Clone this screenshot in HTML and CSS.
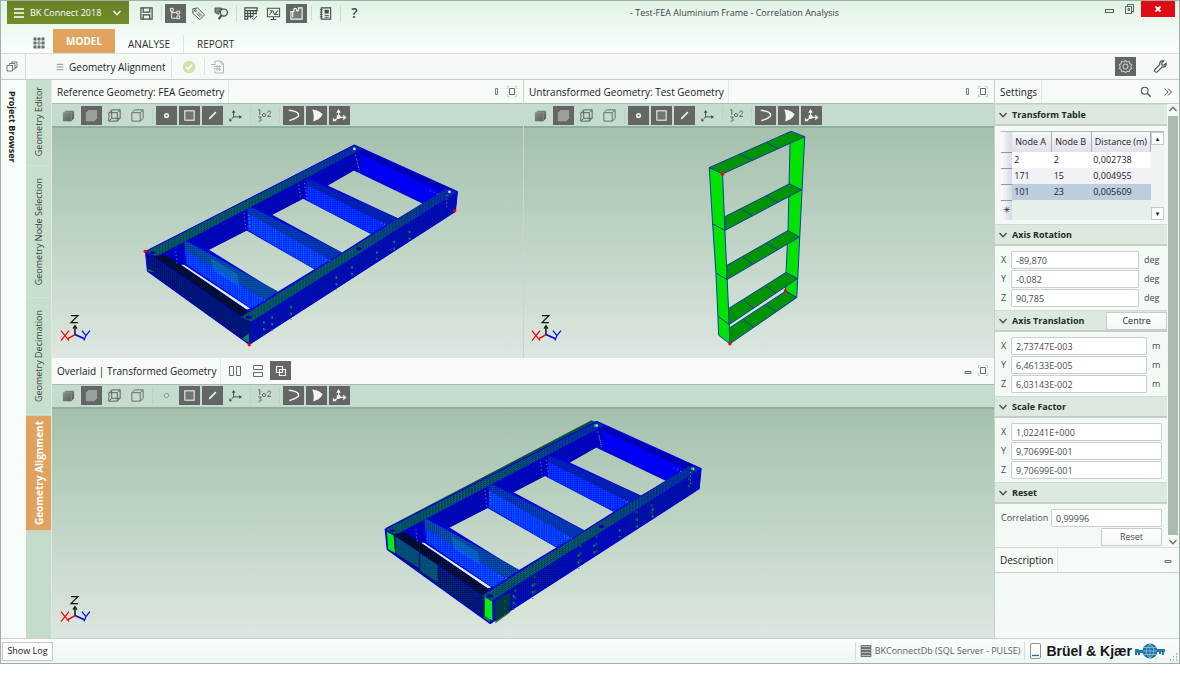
FILE: index.html
```
<!DOCTYPE html>
<html lang="en">
<head>
<meta charset="utf-8">
<title>Test-FEA Aluminium Frame - Correlation Analysis</title>
<link rel="stylesheet" href="styles.css">
</head>
<body>
<svg class="defs" aria-hidden="true">
  <defs>
    <linearGradient id="cubeFill" x1="0" y1="0" x2="1" y2="1"><stop offset="0" stop-color="#8c928e"/><stop offset="1" stop-color="#555a57"/></linearGradient>
    <symbol id="i-solid" viewBox="0 0 16 16"><path d="M2 5l3-2h9v8l-3 3H2z" fill="url(#cubeFill)"/><path d="M2 5h9l3-2M11 5v9" fill="none" stroke="#9ca29e" stroke-width=".6"/></symbol>
    <symbol id="i-shaded" viewBox="0 0 16 16"><path d="M2 5l3-3h9v9l-3 3H2z" fill="#9a9f9b"/></symbol>
    <symbol id="i-wire" viewBox="0 0 16 16"><path d="M2 5h9v9H2zM5 2h9v9H5zM2 5l3-3M11 5l3-3M2 14l3-3M11 14l3-3" fill="none" stroke="#555d58"/></symbol>
    <symbol id="i-hidden" viewBox="0 0 16 16"><path d="M2 5h9v9H2zM2 5l3-3h9v9l-3 3M11 5l3-3" fill="none" stroke="#626a65"/></symbol>
    <symbol id="i-point" viewBox="0 0 16 16"><circle cx="8" cy="8" r="2" fill="#777d79" stroke="currentColor" stroke-width="1.6"/></symbol>
    <symbol id="i-point-off" viewBox="0 0 16 16"><circle cx="8" cy="8" r="2.200" fill="#e4eee7" stroke="#7b837e"/></symbol>
    <symbol id="i-face" viewBox="0 0 16 16"><rect x="3" y="3" width="10" height="10" fill="#727774" stroke="currentColor" stroke-width="1.1"/></symbol>
    <symbol id="i-line" viewBox="0 0 16 16"><path d="M4.500 11.500l7-7" stroke="currentColor" stroke-width="1.8"/></symbol>
    <symbol id="i-axes" viewBox="0 0 16 16"><path d="M6 4v5.500h7M6 9.500l-3 3" fill="none" stroke="currentColor"/><path d="M4 5l2-3 2 3zM12 7.500l3 2-3 2zM1.500 11v3h3z" fill="currentColor"/></symbol>
    <symbol id="i-axes-on" viewBox="0 0 16 16"><path d="M7 4v6h6M7 10l-4 3" fill="none" stroke="currentColor" stroke-width="1.3"/><path d="M4.500 5L7 1l2.500 4zM12 7l3.500 3-3.500 3zM1 10.500V14h4z" fill="currentColor"/><circle cx="7" cy="9.500" r="2.200" fill="currentColor"/></symbol>
    <symbol id="i-numbers" viewBox="0 0 16 16"><g fill="none" stroke="#59605c"><path d="M1.500 2.500l1.500-1v6M1.500 9.500h3L3 11.500c3-.3 2.500 3-1.500 2.500"/><circle cx="7.500" cy="7.500" r="1.700"/><path d="M11 5c.5-2.500 4-2.500 3.500 0-.3 1.500-2 2-3.500 4h4"/></g></symbol>
    <symbol id="i-curve" viewBox="0 0 16 16"><path d="M3 2.500c5 .5 10.500 2 10.500 5S8.500 12 3.500 13.500" fill="none" stroke="currentColor" stroke-width="1.600"/></symbol>
    <symbol id="i-fan" viewBox="0 0 16 16"><path d="M3.500 1.500c4.500.5 9 2 11 5.500C12.500 11 9 13 4.500 14.500 5.500 10 5 5 3.500 1.500z" fill="currentColor"/></symbol>
    <symbol id="i-save" viewBox="0 0 16 16"><path d="M2 2h12v12H2zM4.500 2v4.500h7V2M4.500 14V9.500h7V14" fill="none" stroke="currentColor" stroke-width="1.3"/></symbol>
    <symbol id="i-tree" viewBox="0 0 16 16"><path d="M4 4v9h6M4 7h6" fill="none" stroke="currentColor"/><path d="M2.500 2.500h3v3h-3zM9.500 5.500h3v3h-3zM9.500 10.500h3v3h-3z" fill="#6c706d" stroke="currentColor"/></symbol>
    <symbol id="i-tag" viewBox="0 0 16 16"><path d="M2 3l5-1 7.500 7.500-5 5L2 8z" fill="none" stroke="currentColor"/><circle cx="4.700" cy="4.900" r="1" fill="none" stroke="currentColor"/><path d="M6 8l4 4M8 6.500l4 4M7.500 8l3 3" stroke="currentColor" stroke-width=".8"/></symbol>
    <symbol id="i-search-tag" viewBox="0 0 16 16"><path d="M1 2h7l1 1-3 2-1 4-4-2z" fill="#7b817d" stroke="currentColor" stroke-width=".8"/><circle cx="10.500" cy="7" r="3.800" fill="#dbe6de" stroke="currentColor" stroke-width="1.3"/><path d="M8 10l-3 4" stroke="currentColor" stroke-width="2.200"/></symbol>
    <symbol id="i-matrix" viewBox="0 0 16 16"><path d="M2 2h13v3H2zM2 5v9h3V5M5 8H2M5 11H2M8 5v8M11 5v5M5 8h9M5 11h6M14 5v4" fill="none" stroke="currentColor" stroke-width="1.3"/><path d="M9.500 12.500l2 2 3.500-4" fill="none" stroke="currentColor"/></symbol>
    <symbol id="i-monitor" viewBox="0 0 16 16"><path d="M1.500 2.500h13v9h-13zM5 14.500h6M8 11.500v3M3.500 9c2 0 2-4 3.500-4s1 4 2.500 4 1-4 3.500-4M4 5h2M10 9h3" fill="none" stroke="currentColor" stroke-width="1.100"/></symbol>
    <symbol id="i-puzzle" viewBox="0 0 16 16"><path d="M2 14V6h3V4c0-2 3-2 3 0v1h2V2h4v12zM4 6v6" fill="#777b78" stroke="currentColor" stroke-width="1.200"/></symbol>
    <symbol id="i-notebook" viewBox="0 0 16 16"><path d="M3.500 2h10v12h-10z" fill="none" stroke="currentColor" stroke-width="1.200"/><path d="M2 4h3M2 6.500h3M2 9h3M2 11.500h3M7 10h4.500M7 12h4.500" stroke="currentColor"/><path d="M7 4h4.500v4H7z" fill="currentColor"/></symbol>
    <symbol id="i-tiles" viewBox="0 0 12 12"><path d="M.500.500h3v3h-3zM4.500.500h3v3h-3zM8.500.500h3v3h-3zM.500 4.500h3v3h-3zM8.500 4.500h3v3h-3zM.500 8.500h3v3h-3zM4.500 8.500h3v3h-3zM8.500 8.500h3v3h-3z" fill="#656c68"/><circle cx="6" cy="6" r="1.300" fill="none" stroke="#646b67"/></symbol>
    <symbol id="i-copy" viewBox="0 0 12 12"><path d="M1 4.500h5.500V10H1zM3.500 4.500v-2H9V8H6.500M5.500 2.500V1H11v5.500H9" fill="none" stroke="#757d79"/></symbol>
    <symbol id="i-lines" viewBox="0 0 12 12"><path d="M1 2h10M1 6h10M1 10h10" stroke="currentColor" stroke-width="1.300"/></symbol>
    <symbol id="i-down" viewBox="0 0 10 10"><path d="M1.500 3L5 6.800 8.500 3" fill="none" stroke="currentColor" stroke-width="1.300"/></symbol>
    <symbol id="i-check" viewBox="0 0 14 14"><circle cx="7" cy="7" r="6.300" fill="#d3e2ab"/><path d="M4 7l2.200 2.300L10 4.800" fill="none" stroke="#fff" stroke-width="1.500"/></symbol>
    <symbol id="i-doc" viewBox="0 0 14 14"><path d="M4 4V1h6l2.500 2.500V13H4v-2M10 1v3h2.500" fill="none" stroke="#b4bbb7"/><path d="M0 4.500h5M3 6.500h7M3 9h7M6 5v6M8.500 5v6" stroke="#b4bbb7"/></symbol>
    <symbol id="i-gear" viewBox="0 0 16 16"><path d="M8 1.500l1.700 1.600 2.300-.6.600 2.300 2 1.500L13.500 8l1.100 2-2 1.300-.6 2.200-2.300-.5L8 14.500 6.300 13l-2.300.5-.6-2.200-2-1.300L2.500 8 1.400 6.300l2-1.500.6-2.300 2.300.6z" fill="none" stroke="#c9cecb" stroke-width="1.100"/><circle cx="8" cy="8" r="2.600" fill="none" stroke="#c9cecb" stroke-width="1.100"/></symbol>
    <symbol id="i-wrench" viewBox="0 0 16 16"><path d="M14 4.500L11.700 6.600 9.600 6.300 9.300 4.200 11.500 2C9 1.200 6.500 3.300 7.200 6L2 11.200c-1.300 1.500 1 3.700 2.500 2.500L9.800 8.500c2.700.8 5-1.500 4.200-4z" fill="none" stroke="currentColor" stroke-width="1.200"/></symbol>
    <symbol id="i-pin" viewBox="0 0 12 12"><path d="M4.500 2.500h2v6h-2z" fill="none" stroke="#767e79"/></symbol>
    <symbol id="i-max" viewBox="0 0 12 12"><path d="M3.500 2.500h5v6h-5z" fill="none" stroke="#666e69"/><path d="M1.500 3V.500h2M8.500.500h2V3M10.500 8v2.500h-2M3.500 10.500h-2V8" fill="none" stroke="#c3cac5"/></symbol>
    <symbol id="i-min" viewBox="0 0 12 12"><path d="M3 6.500h6v2H3z" fill="none" stroke="#666e69"/></symbol>
    <symbol id="i-cols" viewBox="0 0 14 14"><path d="M1.500 2.500h4v9h-4zM8.500 2.500h4v9h-4z" fill="none" stroke="#666e69"/></symbol>
    <symbol id="i-rows" viewBox="0 0 14 14"><path d="M2.500 1.500h9v4h-9zM2.500 8.500h9v4h-9z" fill="none" stroke="#666e69"/></symbol>
    <symbol id="i-overlay" viewBox="0 0 14 14"><path d="M2.500 2.500h6v6h-6zM5.500 5.500h6v6h-6z" fill="none" stroke="currentColor" stroke-width="1.200"/></symbol>
    <symbol id="i-find" viewBox="0 0 14 14"><circle cx="5.500" cy="5.500" r="4" fill="none" stroke="currentColor" stroke-width="1.200"/><path d="M8.500 8.500l4 4" stroke="currentColor" stroke-width="1.500"/></symbol>
    <symbol id="i-more" viewBox="0 0 12 12"><path d="M2.500 2.500L6 6 2.500 9.500M6 2.500L9.500 6 6 9.500" fill="none" stroke="currentColor"/></symbol>

    <pattern id="meshDark" width="6" height="6" patternUnits="userSpaceOnUse"><rect width="6" height="6" fill="#0004b4"/><path d="M0 0h3v3H0z" fill="#002c70"/><path d="M3 3h3v3H3z" fill="#0000e0"/></pattern>
    <pattern id="meshWall" width="6" height="6" patternUnits="userSpaceOnUse"><rect width="6" height="6" fill="#0000b8"/><path d="M0 0h3v3H0z" fill="#001890"/><path d="M3 3h3v3H3z" fill="#0000e4"/></pattern>
    <pattern id="meshGreen" width="9" height="6" patternUnits="userSpaceOnUse"><rect width="9" height="6" fill="#04485a"/><path d="M0 0h3v3H0zM5 3h3v3H5z" fill="#0a8048"/><path d="M3 0h3v3H3z" fill="#0018a0"/></pattern>
    <pattern id="meshBlack" width="6" height="6" patternUnits="userSpaceOnUse"><rect width="6" height="6" fill="#000c30"/><path d="M0 0h3v3H0z" fill="#001868"/><path d="M3 3h3v3H3z" fill="#000618"/></pattern>
    <pattern id="meshEnd" width="6" height="6" patternUnits="userSpaceOnUse"><rect width="6" height="6" fill="#000d78"/><path d="M0 0h3v3H0z" fill="#003c48"/><path d="M3 3h3v3H3z" fill="#0000a8"/></pattern>
    <pattern id="meshLight" width="7" height="6" patternUnits="userSpaceOnUse"><rect width="7" height="6" fill="#0034ff"/><path d="M0 0h3v3H0z" fill="#0878ff"/><path d="M4 3h3v2H4z" fill="#0010e0"/></pattern>
    <pattern id="meshTeal" width="6" height="6" patternUnits="userSpaceOnUse"><rect width="6" height="6" fill="#0430b0"/><path d="M0 0h3v3H0z" fill="#069070"/></pattern>
    <linearGradient id="fadeBlue" x1="0" y1="1" x2="1" y2="0"><stop offset="0" stop-color="#0000ff" stop-opacity="0"/><stop offset=".5" stop-color="#0000e8" stop-opacity=".05"/><stop offset="1" stop-color="#0000e8" stop-opacity=".5"/></linearGradient>

    <g id="fea-frame">
      <path d="M44 350L672 30 982 170 976 230 356 630 50 410zM670 107L592 152 803 250 878 207zM518 192L425 240 635 353 722 298zM348 287L235 345 440 472 552 404zM160 391L152 391 348 524 358 522z" fill="#0004dc" fill-rule="evenodd"/>
      <path d="M160 391L152 389 348 525 358 522z" fill="#e4e8f0"/>
      <path d="M75 366L690 45 690 104 670 107 592 152 540 130 518 192 425 240 370 220 348 287 235 345 180 320 160 386z" fill="url(#meshWall)"/>
      <path d="M690 42L960 160 890 205 692 104z" fill="#0000f4"/>
      <path d="M688 40L955 158 938 172 690 58z" fill="#0000b4"/>
      <path d="M528 130L803 250 770 272 528 150z" fill="#0420b4"/>
      <path d="M528 150L768 270 722 298 528 196z" fill="url(#meshLight)"/>
      <path d="M528 150L768 270 722 298 528 196z" fill="#0000ff" opacity=".3"/>
      <path d="M350 212L635 353 600 376 352 238z" fill="url(#meshTeal)"/>
      <path d="M350 212L635 353 600 376 352 238z" fill="#0010d0" opacity=".35"/>
      <path d="M352 236L600 376 552 404 352 286z" fill="url(#meshLight)"/>
      <path d="M160 316L442 470 404 496 162 348z" fill="url(#meshTeal)"/>
      <path d="M162 346L404 496 362 522 166 388z" fill="url(#meshLight)"/>
      <path d="M240 370L320 418 325 455 250 410z" fill="#10a0ff" opacity=".3"/>
      <path d="M80 372L160 330 166 388 148 388z" fill="#0000c4"/>
      <path d="M44 350L672 30 694 42 76 366z" fill="url(#meshGreen)"/>
      <path d="M44 350L672 30 694 42 76 366z" fill="url(#fadeBlue)"/>
      <path d="M50 356L330 548 356 630 50 410z" fill="url(#meshEnd)"/>
      <path d="M66 364L104 360 352 528 334 548z" fill="url(#meshBlack)"/>
      <path d="M330 548L945 163 982 170 362 562z" fill="url(#meshGreen)"/>
      <path d="M330 548L945 163 982 170 362 562z" fill="url(#fadeBlue)"/>
      <path d="M362 562L982 172 976 230 356 630z" fill="url(#meshDark)"/>
      <path d="M330 548L362 562 356 630 330 608z" fill="url(#meshEnd)"/>
      <path d="M335 612l20-16v30zM52 402l18 10-18-2z" fill="#08805a"/>
      <g fill="none" stroke="#0000e8" stroke-width="3"><path d="M44 350L672 30 982 170 976 230 356 630 50 410z"/><path d="M330 548L362 562 356 630M362 562L982 172M330 548L945 163M76 366L690 44" stroke-width="2" stroke-opacity=".5"/></g>
      <g fill="none" stroke="#06905e" stroke-width="5" stroke-dasharray="7 13"><path d="M400 560v44M425 545v44M482 514v42M618 425v42M665 395v40M740 350v24M838 288v34M792 318v32"/></g>
      <g fill="none" stroke="#8080c8" stroke-width="3" stroke-dasharray="3 8"><path d="M675 60l12 48M680 75l6 28M505 150l6 45M522 145l8 48M340 235l6 50M354 240l4 44M135 350l4 38M752 262l20 12M575 370l26 10M380 488l32 12M900 168l26 12M950 180v40"/></g>
      <circle cx="672" cy="42" r="4" fill="#dce6ec"/><circle cx="958" cy="171" r="4" fill="#dce6ec"/><ellipse cx="686" cy="342" rx="8" ry="5" fill="#0000a0"/><ellipse cx="355" cy="548" rx="9" ry="5" fill="#0000a0"/><ellipse cx="66" cy="354" rx="7" ry="4" fill="#0000a0"/>
    </g>
    <g id="triad" fill="none" stroke-width="1.200">
      <path d="M74 335l9 4" stroke="#0000e8" stroke-width="1.800"/><path d="M74 335l-7 4" stroke="#e00" stroke-width="1.500"/><path d="M74 327v8" stroke="#111" stroke-width="1.500"/><path d="M72 329l2-3 2 3" stroke="#111"/>
      <path d="M70 316h7l-7 7h7" stroke="#111"/><path d="M60 331l8 10M68 331l-8 10" stroke="#f00"/><path d="M81 331l4 5 4-5M85 336l-2 5" stroke="#00f"/>
    </g>
  </defs>
</svg>

<div class="app">
  <header class="titlebar">
    <button class="product"><svg class="s12"><use href="#i-lines"/></svg><span>BK Connect 2018</span><svg class="s10"><use href="#i-down"/></svg></button>
    <div class="tools">
      <button class="tool" aria-label="Save"><svg><use href="#i-save"/></svg></button><i class="sep"></i>
      <button class="tool on" aria-label="Tree"><svg><use href="#i-tree"/></svg></button>
      <button class="tool" aria-label="Tag"><svg><use href="#i-tag"/></svg></button>
      <button class="tool" aria-label="Find tag"><svg><use href="#i-search-tag"/></svg></button><i class="sep"></i>
      <button class="tool" aria-label="Matrix"><svg><use href="#i-matrix"/></svg></button>
      <button class="tool" aria-label="Monitor"><svg><use href="#i-monitor"/></svg></button>
      <button class="tool on" aria-label="Components"><svg><use href="#i-puzzle"/></svg></button><i class="sep"></i>
      <button class="tool" aria-label="Notebook"><svg><use href="#i-notebook"/></svg></button><i class="sep"></i>
      <button class="tool help" aria-label="Help">?</button>
    </div>
    <h1>- Test-FEA Aluminium Frame - Correlation Analysis</h1>
    <div class="winbtns">
      <button aria-label="Minimize"><svg class="s12"><rect x="1.500" y="6.500" width="8" height="3" fill="none" stroke="#59615c"/></svg></button>
      <button aria-label="Restore"><svg class="s12"><path d="M1.500 3.500h6v7h-6zM3.500 3.500v-2h6v7h-2M4 5.500h1.500v2H4z" fill="none" stroke="#59615c"/></svg></button>
      <button class="close" aria-label="Close"><svg class="s10"><path d="M2.500 2.500l5 5M7.500 2.500l-5 5" stroke="#fff" stroke-width="1.800"/></svg></button>
    </div>
  </header>
  <nav class="tabs">
    <button class="tiles" aria-label="All tasks"><svg class="s12"><use href="#i-tiles"/></svg></button>
    <button class="tab active">MODEL</button>
    <button class="tab">ANALYSE</button>
    <button class="tab">REPORT</button>
  </nav>
  <div class="taskbar">
    <button class="restore" aria-label="Show panels"><svg class="s12"><use href="#i-copy"/></svg></button>
    <div class="task"><svg class="s8"><use href="#i-lines"/></svg><span>Geometry Alignment</span></div>
    <button class="state" aria-label="Apply"><svg class="s14"><use href="#i-check"/></svg></button>
    <button class="state" aria-label="Report"><svg class="s14"><use href="#i-doc"/></svg></button>
    <span class="grow"></span>
    <button class="tool on" aria-label="Settings"><svg><use href="#i-gear"/></svg></button>
    <button class="tool wrench" aria-label="Properties"><svg><use href="#i-wrench"/></svg></button>
  </div>

  <div class="body">
    <aside class="browser"><button>Project Browser</button></aside>
    <nav class="side">
      <button class="first">Geometry Editor</button>
      <button>Geometry Node Selection</button>
      <button>Geometry Decimation</button>
      <button class="active">Geometry Alignment</button>
    </nav>

    <main class="views">
      <div class="pair">
        <section class="panel">
          <div class="phead"><h2>Reference Geometry: FEA Geometry</h2><span class="grow"></span><svg class="s12"><use href="#i-pin"/></svg><svg class="s12"><use href="#i-max"/></svg></div>
          <div class="tools ptools">
            <button class="tool" aria-label="Solid"><svg><use href="#i-solid"/></svg></button>
            <button class="tool on" aria-label="Shaded"><svg><use href="#i-shaded"/></svg></button>
            <button class="tool" aria-label="Wireframe"><svg><use href="#i-wire"/></svg></button>
            <button class="tool" aria-label="Hidden line"><svg><use href="#i-hidden"/></svg></button><i class="sep"></i>
            <button class="tool on" aria-label="Points"><svg><use href="#i-point"/></svg></button>
            <button class="tool on" aria-label="Faces"><svg><use href="#i-face"/></svg></button>
            <button class="tool on" aria-label="Lines"><svg><use href="#i-line"/></svg></button>
            <button class="tool" aria-label="Axes"><svg><use href="#i-axes"/></svg></button><i class="sep"></i>
            <button class="tool" aria-label="Numbers"><svg><use href="#i-numbers"/></svg></button><i class="sep"></i>
            <button class="tool on" aria-label="Curves"><svg><use href="#i-curve"/></svg></button>
            <button class="tool on" aria-label="Surfaces"><svg><use href="#i-fan"/></svg></button>
            <button class="tool on" aria-label="Origin"><svg><use href="#i-axes-on"/></svg></button>
          </div>
          <div class="canvas">
            <svg viewBox="52 128 470 230" role="img" aria-label="FEA geometry">
              <g transform="translate(130 135) scale(.3333)"><use href="#fea-frame"/><g fill="#f00"><circle cx="43" cy="350" r="5"/><circle cx="974" cy="228" r="5"/><circle cx="356" cy="631" r="5"/></g></g>
              <use href="#triad"/>
            </svg>
          </div>
        </section>
        <section class="panel">
          <div class="phead"><h2>Untransformed Geometry: Test Geometry</h2><span class="grow"></span><svg class="s12"><use href="#i-pin"/></svg><svg class="s12"><use href="#i-max"/></svg></div>
          <div class="tools ptools">
            <button class="tool" aria-label="Solid"><svg><use href="#i-solid"/></svg></button>
            <button class="tool on" aria-label="Shaded"><svg><use href="#i-shaded"/></svg></button>
            <button class="tool" aria-label="Wireframe"><svg><use href="#i-wire"/></svg></button>
            <button class="tool" aria-label="Hidden line"><svg><use href="#i-hidden"/></svg></button><i class="sep"></i>
            <button class="tool on" aria-label="Points"><svg><use href="#i-point"/></svg></button>
            <button class="tool on" aria-label="Faces"><svg><use href="#i-face"/></svg></button>
            <button class="tool on" aria-label="Lines"><svg><use href="#i-line"/></svg></button>
            <button class="tool" aria-label="Axes"><svg><use href="#i-axes"/></svg></button><i class="sep"></i>
            <button class="tool" aria-label="Numbers"><svg><use href="#i-numbers"/></svg></button><i class="sep"></i>
            <button class="tool on" aria-label="Curves"><svg><use href="#i-curve"/></svg></button>
            <button class="tool on" aria-label="Surfaces"><svg><use href="#i-fan"/></svg></button>
            <button class="tool on" aria-label="Origin"><svg><use href="#i-axes-on"/></svg></button>
          </div>
          <div class="canvas">
            <svg viewBox="523 128 471 230" role="img" aria-label="Test geometry">
              <g transform="translate(690 125) scale(.3333)" stroke="#1238b0" stroke-width="3" stroke-linejoin="round">
                <path d="M56 128L96 147 103 317 110 465 116 600 118 658 84 632 82 575 76 445 66 297z" fill="#00e400"/>
                <path d="M299 50L343 35 335 195 328 337 322 462 319 519 285 498 287 440 293 310 296 178z" fill="#00e400"/>
                <g fill="#009400"><path d="M56 128L302 19 343 35 96 147z"/><path d="M104 275L297 177 334 195 103 317z"/><path d="M109 422L293 317 327 337 109 465z"/><path d="M114 552L287 443 321 462 116 600z"/><path d="M117 610L285 500 319 519 118 658z"/></g>
                <path d="M148 88l38 18M228 53l36 18M152 252l34 21M226 213l37 20M156 396l31 22M226 356l36 18M159 526l29 25M224 483l32 22M159 585l28 22M225 540l31 20M66 297l37 20M76 445l34 20M82 575l34 25" fill="none"/>
                <g fill="#f00" stroke="none"><circle cx="96" cy="148" r="5"/><circle cx="285" cy="498" r="5"/><circle cx="118" cy="658" r="5"/></g>
              </g>
              <use href="#triad" x="471"/>
            </svg>
          </div>
        </section>
      </div>
      <section class="panel overlaid">
        <div class="phead"><h2>Overlaid | Transformed Geometry</h2>
          <div class="layouts">
            <button class="tool" aria-label="Side by side"><svg class="s14"><use href="#i-cols"/></svg></button>
            <button class="tool" aria-label="Stacked"><svg class="s14"><use href="#i-rows"/></svg></button>
            <button class="tool on" aria-label="Overlaid"><svg class="s14"><use href="#i-overlay"/></svg></button>
          </div>
          <span class="grow"></span><svg class="s12"><use href="#i-min"/></svg><svg class="s12"><use href="#i-max"/></svg></div>
        <div class="tools ptools">
          <button class="tool" aria-label="Solid"><svg><use href="#i-solid"/></svg></button>
          <button class="tool on" aria-label="Shaded"><svg><use href="#i-shaded"/></svg></button>
          <button class="tool" aria-label="Wireframe"><svg><use href="#i-wire"/></svg></button>
          <button class="tool" aria-label="Hidden line"><svg><use href="#i-hidden"/></svg></button><i class="sep"></i>
          <button class="tool" aria-label="Points"><svg><use href="#i-point-off"/></svg></button>
          <button class="tool on" aria-label="Faces"><svg><use href="#i-face"/></svg></button>
          <button class="tool on" aria-label="Lines"><svg><use href="#i-line"/></svg></button>
          <button class="tool" aria-label="Axes"><svg><use href="#i-axes"/></svg></button><i class="sep"></i>
          <button class="tool" aria-label="Numbers"><svg><use href="#i-numbers"/></svg></button><i class="sep"></i>
          <button class="tool on" aria-label="Curves"><svg><use href="#i-curve"/></svg></button>
          <button class="tool on" aria-label="Surfaces"><svg><use href="#i-fan"/></svg></button>
          <button class="tool on" aria-label="Origin"><svg><use href="#i-axes-on"/></svg></button>
        </div>
        <div class="canvas">
          <svg viewBox="52 408 942 230" role="img" aria-label="Overlaid geometry">
            <g transform="translate(370 410) scale(.3333)">
              <path d="M46 352L665 28 680 34 60 358z" fill="#075040"/>
              <use href="#fea-frame" transform="translate(0 1) scale(1.013)"/>
              <path d="M76 378L146 424 146 472 76 428zM150 428L202 464 202 514 150 480z" fill="#0a8070" opacity=".55"/>
              <path d="M376 572L420 545 420 606 376 638z" fill="#004a20" opacity=".75"/>
              <path d="M50 364L70 374 74 427 54 415zM344 560L366 572 367 630 344 616z" fill="#00ee10"/>
              <circle cx="676" cy="44" r="4" fill="#00d830"/><circle cx="968" cy="174" r="4" fill="#00d830"/>
              <path d="M800 300v36M846 280v40M958 200v42M632 402v56M680 374v54M494 495v54M436 536v48" stroke="#005a38" stroke-width="6" stroke-dasharray="8 14" fill="none"/>
            </g>
            <use href="#triad" y="280"/>
          </svg>
        </div>
      </section>
    </main>

    <aside class="settings">
      <div class="phead"><h2>Settings</h2><span class="grow"></span><button class="ico" aria-label="Search"><svg class="s12"><use href="#i-find"/></svg></button><button class="ico" aria-label="Collapse"><svg class="s12"><use href="#i-more"/></svg></button></div>
      <div class="scroller">
        <div class="sections">
          <section>
            <h3><svg class="s10"><use href="#i-down"/></svg>Transform Table</h3>
            <div class="tablebox">
              <table>
                <thead><tr><th class="rowhead"></th><th>Node A</th><th>Node B</th><th>Distance (m)</th></tr></thead>
                <tbody>
                  <tr><td class="rowhead"></td><td>2</td><td>2</td><td>0,002738</td></tr>
                  <tr class="alt"><td class="rowhead"></td><td>171</td><td>15</td><td>0,004955</td></tr>
                  <tr class="sel"><td class="rowhead"></td><td>101</td><td>23</td><td>0,005609</td></tr>
                  <tr class="new"><td class="rowhead star">✳</td><td></td><td></td><td></td></tr>
                </tbody>
              </table>
              <div class="minibar"><button aria-label="Up">▲</button><button aria-label="Down">▼</button></div>
            </div>
          </section>
          <section>
            <h3><svg class="s10"><use href="#i-down"/></svg>Axis Rotation</h3>
            <div class="fields deg">
              <label for="rx">X</label><input id="rx" value="-89,870"><span>deg</span>
              <label for="ry">Y</label><input id="ry" value="-0,082"><span>deg</span>
              <label for="rz">Z</label><input id="rz" value="90,785"><span>deg</span>
            </div>
          </section>
          <section>
            <h3><svg class="s10"><use href="#i-down"/></svg>Axis Translation<button class="push">Centre</button></h3>
            <div class="fields metre">
              <label for="tx">X</label><input id="tx" value="2,73747E-003"><span>m</span>
              <label for="ty">Y</label><input id="ty" value="6,46133E-005"><span>m</span>
              <label for="tz">Z</label><input id="tz" value="6,03143E-002"><span>m</span>
            </div>
          </section>
          <section>
            <h3><svg class="s10"><use href="#i-down"/></svg>Scale Factor</h3>
            <div class="fields">
              <label for="sx">X</label><input id="sx" value="1,02241E+000">
              <label for="sy">Y</label><input id="sy" value="9,70699E-001">
              <label for="sz">Z</label><input id="sz" value="9,70699E-001">
            </div>
          </section>
          <section>
            <h3><svg class="s10"><use href="#i-down"/></svg>Reset</h3>
            <div class="reset">
              <label for="corr">Correlation</label><input id="corr" value="0,99996">
              <button class="push">Reset</button>
            </div>
          </section>
        </div>
        <div class="scrollbar"><svg class="s10 up"><use href="#i-down"/></svg><div class="thumb"></div><svg class="s10"><use href="#i-down"/></svg></div>
      </div>
      <div class="phead desc"><h2>Description</h2><span class="grow"></span><svg class="s12"><use href="#i-min"/></svg></div>
    </aside>
  </div>

  <footer>
    <button class="log">Show Log</button>
    <span class="grow"></span>
    <div class="db"><svg class="s12" viewBox="0 0 12 12"><path d="M1 .500h10v2H1zM1 3.500h10v2H1zM1 6.500h10v2H1zM1 9.500h10v2H1z" fill="#b4bab6" stroke="#555c58" stroke-width=".8"/></svg><span>BKConnectDb (SQL Server - PULSE)</span></div>
    <svg class="device" viewBox="0 0 11 16"><rect x=".500" y=".500" width="10" height="15" rx="1.500" fill="#fdfefd" stroke="#8e9590"/><path d="M2 12.500h7" stroke="#2d6db8" stroke-width="1.400"/></svg>
    <strong class="brand">Brüel &amp; Kjær</strong>
    <svg class="globe" viewBox="0 0 30 16"><path d="M0 6h4v1h18v3H5v2H3v-2H2v2H0zM21 6h9v3h-1v3h-2V9h-1v2h-2V9h-3z" fill="#2878ae"/><circle cx="15" cy="8" r="7.500" fill="#1e71aa"/><path d="M8 8h14M9 4.500h12M9 11.500h12M15 1v14M15 1c-5 4-5 10 0 14M15 1c5 4 5 10 0 14" fill="none" stroke="#9ccbe6" stroke-width=".7"/></svg>
    <svg class="s10 grip"><path d="M8 1h1M5 4h1M8 4h1M2 7h1M5 7h1M8 7h1" stroke="#8fa396" stroke-width="1.500"/></svg>
  </footer>
</div>
</body>
</html>
```
FILE: styles.css
```
* { box-sizing: border-box; }
body {
  margin: 0;
  height: 100vh;
  padding-bottom: 10px;
  background: #fff;
  color: #1c201e;
  font: 10px/14px "Open Sans", "Noto Sans", sans-serif;
}
button, input { font: inherit; color: inherit; margin: 0; padding: 0; border: 0; background: none; }
h1, h2, h3 { margin: 0; font-size: 10px; font-weight: 400; }
svg { display: block; flex: none; }
.defs { position: absolute; width: 0; height: 0; }
.s8 { width: 8px; height: 10px; }
.s10 { width: 10px; height: 10px; }
.s12 { width: 12px; height: 12px; }
.tool svg.s14, .s14 { width: 14px; height: 14px; }
.grow { flex: 1; }

.app {
  height: 100%;
  display: flex;
  flex-direction: column;
  border: 1px solid #9fb0a5;
  background: #f6fbf7;
}

/* Title bar */
.titlebar {
  flex: none;
  height: 24px;
  display: flex;
  align-items: center;
  padding-left: 6px;
  background: linear-gradient(#e0f3e5, #edf8f0);
}
.product {
  align-self: flex-start;
  height: 23px;
  width: 122px;
  display: flex;
  align-items: center;
  gap: 5px;
  padding: 0 7px 0 6px;
  font-size: 9px;
  font-weight: 500;
  color: #fff;
  background: linear-gradient(#688124, #738c2b);
}
.product span { flex: 1; text-align: left; white-space: nowrap; }
.tools { display: flex; align-items: center; gap: 2px; }
.titlebar .tools { margin-left: 7px; }
.tool {
  flex: none;
  width: 21px;
  height: 19px;
  display: flex;
  align-items: center;
  justify-content: center;
  color: #444b47;
}
.tool svg { width: 15px; height: 15px; }
.on { background: #626764; color: #f2f4f2; }
.sep { flex: none; width: 4px; height: 16px; background: linear-gradient(#b9cabf, #b9cabf) center / 1px 100% no-repeat; opacity: .6; }
.help { font-size: 14px; font-weight: 600; }
h1 { flex: 1; text-align: center; font-size: 9px; color: #3a423d; }
.winbtns { align-self: flex-start; display: flex; align-items: center; gap: 8px; padding-right: 4px; }
.winbtns .close { width: 34px; height: 16px; margin-left: -3px; display: flex; align-items: center; justify-content: center; background: #df0a14; }

/* Task tabs */
.tabs {
  flex: none;
  height: 29px;
  display: flex;
  align-items: flex-end;
  padding-left: 32px;
  background: linear-gradient(#edf8f0, #fdfffd);
  border-bottom: 1px solid #d5dfd8;
}
.tiles { margin: 0 8px 4px 0; }
.tab { height: 18px; padding: 0 13px; color: #2b322e; }
.tab + .tab + .tab { border-left: 1px solid #dbe6de; }
.tab.active { height: 24px; font-weight: 700; color: #fff; background: #e0a45e; border: 0; }

.taskbar {
  flex: none;
  height: 26px;
  display: flex;
  align-items: center;
  padding-right: 8px;
  background: #f5faf6;
  border-bottom: 1px solid #c3ccc6;
}
.restore { width: 25px; height: 100%; padding-left: 5px; border-right: 1px solid #d3dbd6; margin-right: 30px; }
.task { display: flex; align-items: center; gap: 5px; height: 20px; padding-right: 5px; border-right: 1px solid #dbe3de; font-weight: 500; }
.task svg { color: #7d8781; }
.state { padding: 0 8px 0 10px; height: 16px; border-right: 1px solid #dbe3de; }
.state + .state { border: 0; padding-left: 6px; }
.wrench { margin-left: 14px; }

/* Body */
.body { flex: 1; min-height: 0; display: flex; }
.browser { flex: none; width: 25px; background: #f7fcf8; }
.browser button { writing-mode: vertical-rl; width: 22px; padding-top: 11px; font-size: 9px; font-weight: 700; }
.side { flex: none; width: 25px; display: flex; flex-direction: column; background: #c5dbca; }
.side button { writing-mode: vertical-rl; transform: rotate(180deg); width: 25px; padding: 12px 0; white-space: nowrap; font-size: 9px; color: #39423c; background: #c9dfce; border-top: 1px solid #d3e4d7; }
.side .first { padding: 9px 0 7px; }
.side .active { padding: 5px 0; font-size: 10px; font-weight: 700; color: #fff; background: #dfa35f; border: 0; }

.views { flex: 1; min-width: 0; display: flex; flex-direction: column; border-left: 1px solid #dfe9e2; }
.pair { flex: 1 1 278px; min-height: 0; display: grid; grid-template-columns: 1fr 1fr; }
.panel { min-width: 0; min-height: 0; display: flex; flex-direction: column; }
.panel + .panel { border-left: 1px solid #cbd5ce; }
.overlaid { flex: 1 1 281px; }
.phead {
  flex: none;
  height: 23px;
  display: flex;
  align-items: center;
  gap: 3px;
  padding: 0 5px;
  background: #f6fbf7;
}
.phead h2 { align-self: stretch; display: flex; align-items: center; padding-right: 4px; border-right: 1px solid #e1e9e4; font-weight: 500; white-space: nowrap; }
.overlaid .phead { height: 26px; }
.layouts { display: flex; gap: 2px; }
.ptools { flex: none; height: 25px; padding-left: 6px; background: #c5dbce; border-top: 1px solid #aebbb2; border-bottom: 2px solid #8fae9b; }
.canvas { flex: 1; min-height: 0; background: linear-gradient(#a4c1ac, #dce7df); }
.canvas svg { width: 100%; height: 100%; }

/* Settings */
.settings { flex: none; width: 185px; display: flex; flex-direction: column; background: #f3f9f5; border-left: 1px solid #c6d0c9; }
.settings .phead { gap: 4px; }
.ico { padding: 0 3px; color: #4c5550; }
.ico + .ico { padding-right: 0; }
.scroller { flex: none; display: flex; border-top: 1px solid #c3ccc6; }
.sections { flex: 1; min-width: 0; padding-bottom: 1px; }
.scrollbar { flex: none; width: 12px; display: flex; flex-direction: column; align-items: center; gap: 2px; color: #66706a; background: #f3f8f4; }
.up { transform: rotate(180deg); }
.thumb { flex: 1; width: 10px; background: #a7bcae; }
h3 { height: 22px; display: flex; align-items: center; gap: 4px; padding-left: 3px; font-size: 9px; font-weight: 700; background: #dce9df; border-top: 1px solid #d0dbd3; border-bottom: 2px solid #c5cfc8; color: #232a26; }
h3 svg { color: #48514c; }
.tablebox { display: flex; margin: 5px 3px 4px 6px; font-size: 9px; background: #e8f2ea; border-top: 1px solid #b4bcb8; }
table { flex: 1; border-collapse: collapse; table-layout: fixed; }
th, td { height: 16px; padding: 0 2px; line-height: 12px; font-weight: 400; text-align: left; white-space: nowrap; background: #fff; }
th { height: 20px; padding: 0 3px; background: linear-gradient(#f6f7f9, #dfe2e8); border-right: 1px solid #a9aebb; }
th:nth-child(2), th:nth-child(3) { width: 40px; }
.alt td { background: #f1f2f5; }
.sel td { background: #bccddd; }
.new td { height: 20px; background: #e6f0e8; }
tr > .rowhead.rowhead { width: 12px; padding: 0; background: linear-gradient(90deg, #fbfcfd, #d5d9e2); border-right: 0; border-bottom: 1px solid #8d93b6; }
.new > .star.star { border: 0; text-align: center; font-size: 9px; }
.minibar { width: 13px; display: flex; flex-direction: column; justify-content: space-between; background: #f0f2f1; }
.minibar button { height: 13px; font-size: 6px; line-height: 10px; text-align: center; background: #fdfefd; border: 1px solid #c5cbc7; }
.fields { display: grid; grid-template-columns: 10px 1fr; align-items: center; row-gap: 1px; padding: 5px 5px 3px 6px; font-size: 9px; color: #454d48; }
.deg { grid-template-columns: 10px 1fr 23px; }
.metre { grid-template-columns: 10px 1fr 15px; }
.fields span { padding-left: 5px; }
input { min-width: 0; width: 100%; height: 18px; padding: 0 4px; border: 1px solid #c8d1cb; border-radius: 1px; background: #fff; font-size: 9px; }
.push { width: 61px; height: 18px; font-size: 9px; font-weight: 400; text-align: center; background: linear-gradient(#fff, #f3f8f5); border: 1px solid #c5cfc8; border-radius: 1px; }
h3 .push { margin-left: auto; }
.reset { display: grid; grid-template-columns: 50px 1fr; align-items: center; row-gap: 1px; padding: 5px 5px 0 6px; font-size: 9px; color: #454d48; }
.reset .push { grid-column: 2; justify-self: end; }
.settings .desc { height: 26px; border-top: 1px solid #d5ded8; border-bottom: 1px solid #c6d0c9; }

/* Status bar */
footer { flex: none; height: 25px; display: flex; align-items: center; padding: 0 1px; background: linear-gradient(#fbfefc, #eef6f0); border-top: 1px solid #c9d3cc; }
.log { width: 51px; height: 19px; background: #fbfdfb; border: 1px solid #c2ccc5; white-space: nowrap; font-size: 9px; }
.db { display: flex; align-items: center; gap: 3px; height: 18px; padding: 0 4px; border: solid #d5ded8; border-width: 0 1px; font-size: 9px; color: #5d6560; white-space: nowrap; }
.device { width: 11px; height: 16px; margin: 0 5px; }
.brand { font: 700 14px/18px "Liberation Sans", Arial, sans-serif; color: #15181a; white-space: nowrap; }
.globe { width: 30px; height: 16px; margin: 0 3px; }
.grip { align-self: flex-end; }
```
